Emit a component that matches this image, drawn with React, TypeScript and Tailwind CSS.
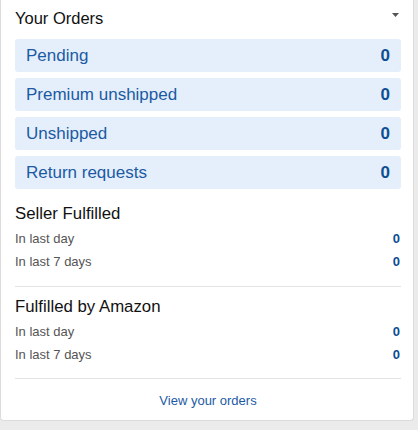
const statusRows = [
  { label: "Pending", count: 0 },
  { label: "Premium unshipped", count: 0 },
  { label: "Unshipped", count: 0 },
  { label: "Return requests", count: 0 },
];

const sections = [
  {
    title: "Seller Fulfilled",
    rows: [
      { label: "In last day", count: 0 },
      { label: "In last 7 days", count: 0 },
    ],
  },
  {
    title: "Fulfilled by Amazon",
    rows: [
      { label: "In last day", count: 0 },
      { label: "In last 7 days", count: 0 },
    ],
  },
];

export default function App() {
  return (
    <div className="h-[430px] w-[418px] bg-[#ebebeb] font-['Liberation_Sans',Arial,sans-serif]">
      <div className="w-[414px] rounded-br-[4px] rounded-bl-[4px] border border-t-0 border-[#dcdcdc] bg-white pl-[14px] pr-[12px]">
        <div className="flex h-[30px] items-start justify-between pt-[6px]">
          <h2 className="text-[16.5px] leading-[24px] text-[#111]">Your Orders</h2>
          <svg width="7" height="4" viewBox="0 0 7 4" className="mt-[7px] mr-[2px]">
            <path d="M0 0h7L3.5 4z" fill="#555" />
          </svg>
        </div>

        <div className="mt-[9px] flex flex-col gap-[6px]">
          {statusRows.map((row) => (
            <div
              key={row.label}
              className="flex h-[33px] items-center justify-between rounded-[3px] bg-[#e4effb] px-[11px]"
            >
              <span className="text-[17px] text-[#1c5aa3]">{row.label}</span>
              <span className="text-[17px] font-bold text-[#0d4d94]">{row.count}</span>
            </div>
          ))}
        </div>

        {sections.map((section, i) => (
          <div
            key={section.title}
            className={
              i === 0
                ? "mt-[14px] border-b border-[#e3e3e3] pb-[13px]"
                : "border-b border-[#e3e3e3] pt-[9px] pb-[12px]"
            }
          >
            <h3 className="mb-[2px] h-[22px] text-[16.8px] leading-[22px] text-[#111]">
              {section.title}
            </h3>
            {section.rows.map((row) => (
              <div key={row.label} className="flex h-[23px] items-center justify-between">
                <span className="text-[13px] text-[#555]">{row.label}</span>
                <span className="mr-[1px] text-[13px] font-bold text-[#0d4d94]">{row.count}</span>
              </div>
            ))}
          </div>
        ))}

        <div className="pt-[9px] pb-[8px] text-center">
          <a className="text-[13px] leading-[20px] text-[#1c5aa3]">View your orders</a>
        </div>
      </div>
    </div>
  );
}
